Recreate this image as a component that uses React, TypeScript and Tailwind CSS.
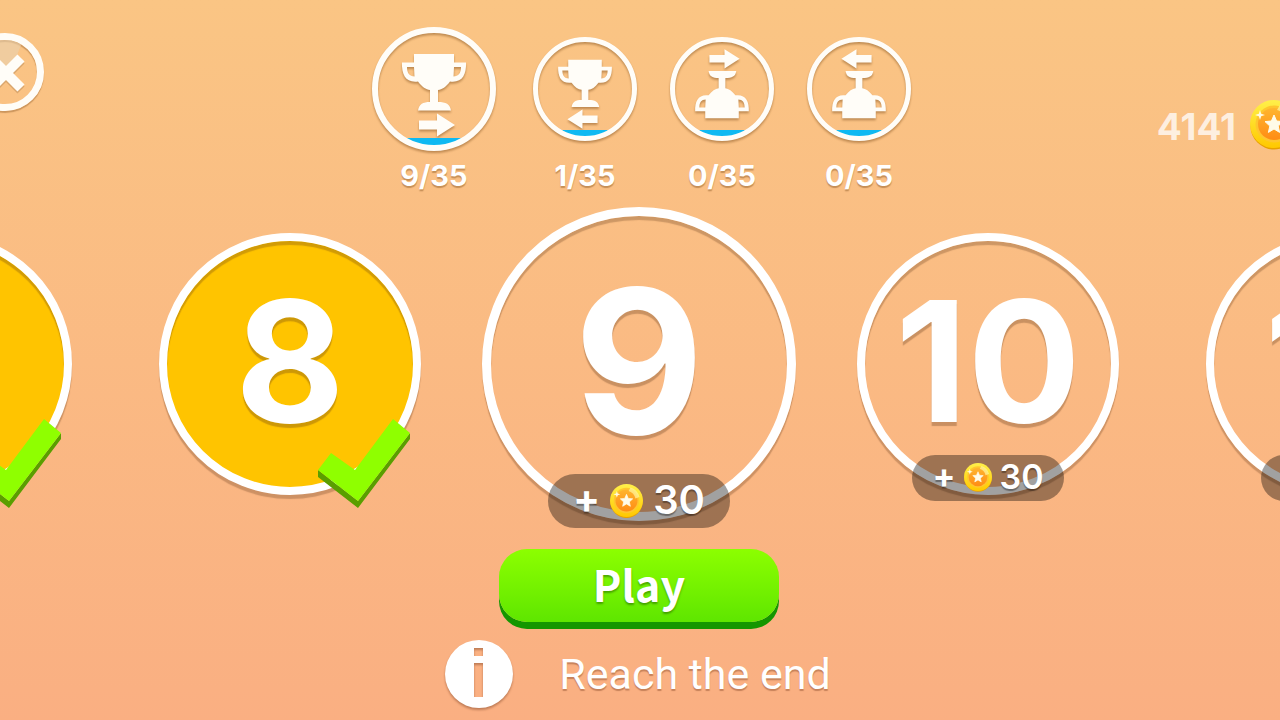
import React from "react";

type Direction = "right" | "left";

function Arrow({ y, dir }: { y: number; dir: Direction }) {
  return (
    <g transform={`translate(${dir === "right" ? 64 : 60} ${y})${dir === "left" ? " scale(-1 1)" : ""}`}>
      <path d="M-17 -4.500H1V-11.500L19 0L1 11.500V4.500H-17Z" />
    </g>
  );
}

function Cup() {
  return (
    <path
      fillRule="evenodd"
      d="M42 27H82V35.500H94C94.500 48 90 56 78 54.500C74 60 70 62.500 66 63V75C74 75 78 77 79 83.500H46C47 77 51 75 58 75V63C54 62.500 50 60 46 54.500C34 56 29.500 48 30 35.500H42ZM42 40H35C35 46 37.500 49.500 42.500 49.500ZM82 40L81.500 49.500C86.500 49.500 89 46 89 40Z"
    />
  );
}

function TrophyBadge({ active, flipped, dir }: { active?: boolean; flipped?: boolean; dir: Direction }) {
  return (
    <svg
      viewBox="0 0 124 126"
      aria-hidden="true"
      className={
        active
          ? "w-[124px] overflow-visible drop-shadow-[0_2px_1px_rgba(120,70,20,0.45)]"
          : "w-[104px] overflow-visible drop-shadow-[0_2px_1px_rgba(120,70,20,0.45)]"
      }
    >
      <path d="M34 111H90Q62 130 34 111Z" fill="#0fb9f2" />
      <circle cx="62" cy="62" r="59" fill="none" stroke="#fffdf8" strokeWidth="6" />
      <g fill="#fffdf8">
        {flipped ? (
          <g transform="translate(0 124) scale(1 -1)">
            <Cup />
          </g>
        ) : (
          <Cup />
        )}
        <Arrow y={flipped ? 26 : 98} dir={dir} />
      </g>
    </svg>
  );
}

function Coin({ className }: { className: string }) {
  return (
    <svg viewBox="0 0 48 50" aria-hidden="true" className={className}>
      <defs>
        <linearGradient id="coinRim" x1="0" y1="0" x2="0" y2="1">
          <stop offset="0" stopColor="#fff04a" />
          <stop offset="1" stopColor="#ffc800" />
        </linearGradient>
        <linearGradient id="coinFace" x1="0" y1="0" x2="0" y2="1">
          <stop offset="0" stopColor="#ffb52e" />
          <stop offset="1" stopColor="#ff8c14" />
        </linearGradient>
      </defs>
      <circle cx="24" cy="26" r="23.500" fill="#e8a000" />
      <circle cx="24" cy="24" r="24" fill="url(#coinRim)" />
      <circle cx="24" cy="24" r="18.500" fill="#ffc62e" />
      <circle cx="24" cy="24" r="16" fill="url(#coinFace)" />
      <path d="M30 5A20 20 0 0 1 43 19L37 21A15 15 0 0 0 27 10Z" fill="#fff6a0" opacity="0.7" />
      <path d="M24 15L26.600 21L33 21.600L28.200 26L29.600 32.400L24 29L18.400 32.400L19.800 26L15 21.600L21.400 21Z" fill="#fffbe8" stroke="#fffbe8" />
      <path d="M10 10L11.200 13.800L15 15L11.200 16.200L10 20L8.800 16.200L5 15L8.800 13.800Z" fill="#fffbe0" />
    </svg>
  );
}

function Check() {
  return (
    <svg viewBox="0 0 92 90" aria-hidden="true" className="absolute right-[3px] -bottom-[22px] w-[92px]">
      <path d="M0 51L40 82L92 14V20L40 89L0 58Z" fill="#5a9e00" />
      <path d="M0 51L13 34L37 51L75 0L92 14L40 82Z" fill="#8fff00" />
    </svg>
  );
}

interface LevelProps {
  n: number;
  done?: boolean;
  current?: boolean;
}

const ringShadow = "shadow-[0_4px_1px_rgba(90,50,20,0.28),inset_0_4px_1px_rgba(90,50,20,0.28)]";

function Level({ n, done, current }: LevelProps) {
  return (
    <li className="flex w-[349px] shrink-0 items-center justify-center">
      <button
        type="button"
        aria-label={`Level ${n}`}
        className={`relative flex shrink-0 items-center justify-center rounded-full border-white ${ringShadow} ${
          current ? "size-[314px] border-[9px]" : "size-[262px] border-8"
        } ${done ? "bg-[#ffc400]" : ""}`}
      >
        <span
          className={`mb-[6px] font-bold leading-none [text-shadow:0_4px_1px_rgba(90,50,20,0.3)] ${
            current ? "text-[200px]" : "text-[168px]"
          }`}
        >
          {n}
        </span>
        {done ? (
          <Check />
        ) : (
          <span
            className={`absolute flex items-center justify-center rounded-full bg-black/37 font-semibold [text-shadow:0_2px_1px_rgba(0,0,0,0.35)] ${
              current
                ? "-bottom-4 h-[54px] w-[182px] gap-[10px] text-[40px]"
                : "-bottom-[14px] h-[46px] w-[152px] gap-2 text-[34px]"
            }`}
          >
            <span className="pb-[5px] leading-none font-bold">+</span>
            <Coin className={current ? "w-[33px]" : "w-7"} />
            <span className="pb-[3px] leading-none">30</span>
          </span>
        )}
      </button>
    </li>
  );
}

const modes: { label: string; active?: boolean; flipped?: boolean; dir: Direction }[] = [
  { label: "9/35", active: true, dir: "right" },
  { label: "1/35", dir: "left" },
  { label: "0/35", flipped: true, dir: "right" },
  { label: "0/35", flipped: true, dir: "left" },
];

export default function App() {
  return (
    <main className="flex min-h-screen flex-col overflow-hidden bg-linear-to-b from-[#fac584] to-[#faaf82] font-['Inter',sans-serif] text-white">
      <header className="flex h-[192px] items-start justify-between">
        <button
          type="button"
          aria-label="Close"
          className="mt-[33px] -ml-[34px] flex size-[78px] shrink-0 items-center justify-center overflow-hidden rounded-full border-[7px] border-[#fffdf8] shadow-[0_2px_1px_rgba(120,70,20,0.35),inset_0_2px_1px_rgba(120,70,20,0.35)]"
        >
          <svg viewBox="0 0 64 64" aria-hidden="true" className="size-16">
            <path d="M12 0H50L44 15L35 28L16 14Z" fill="#ead2b0" opacity="0.6" />
            <path d="M17 18L47 48M47 18L17 48" stroke="#b98a56" strokeOpacity="0.5" strokeWidth="10" transform="translate(1 2)" />
            <path d="M17 18L47 48M47 18L17 48" stroke="#fffdf8" strokeWidth="10" transform="translate(1 0)" />
          </svg>
        </button>

        <ul className="flex items-start gap-[33px] pt-[26px] pl-[78px]">
          {modes.map((m, i) => (
            <li key={i}>
              <button
                type="button"
                className={`flex flex-col items-center ${m.active ? "w-[132px]" : "w-[104px]"}`}
              >
                <span className="flex h-[128px] items-center">
                  <TrophyBadge active={m.active} flipped={m.flipped} dir={m.dir} />
                </span>
                <span className="text-[29px] leading-[44px] font-bold [text-shadow:0_2px_1px_rgba(120,70,20,0.4)]">
                  {m.label}
                </span>
              </button>
            </li>
          ))}
        </ul>

        <div className="-mr-[18px] flex shrink-0 items-center gap-[14px] pt-[96px]">
          <span className="pt-[3px] text-[37px] font-bold text-white/75">4141</span>
          <Coin className="w-12" />
        </div>
      </header>

      <ol className="flex items-center justify-center pt-[15px] pr-[2px]">
        <Level n={7} done />
        <Level n={8} done />
        <Level n={9} current />
        <Level n={10} />
        <Level n={11} />
      </ol>

      <div className="flex flex-col items-center gap-[11px] pt-7 pr-[2px]">
        <button
          type="button"
          className="h-[73px] w-[280px] rounded-[28px] bg-linear-to-b from-[#8cff00] to-[#5ee600] pb-[6px] font-['Noto_Sans_CJK_JP',sans-serif] text-[43px] leading-[66px] font-bold shadow-[0_7px_0_#149600] [text-shadow:0_2px_2px_rgba(30,90,0,0.5)]"
        >
          Play
        </button>
        <p className="flex items-center gap-[46px] pt-[7px] pr-[2px] font-['Roboto',sans-serif] text-[43px] leading-[68px] [text-shadow:0_2px_1px_rgba(120,60,30,0.4)]">
          <svg viewBox="0 0 68 68" aria-hidden="true" className="size-[68px] overflow-visible drop-shadow-[0_2px_1px_rgba(120,60,30,0.45)]">
            <path fillRule="evenodd" fill="#fff" d="M34 0A34 34 0 1 1 34 68A34 34 0 1 1 34 0ZM29 8V16H38V8ZM29 23V57H38V23Z" />
          </svg>
          <span>Reach the end</span>
        </p>
      </div>
    </main>
  );
}
